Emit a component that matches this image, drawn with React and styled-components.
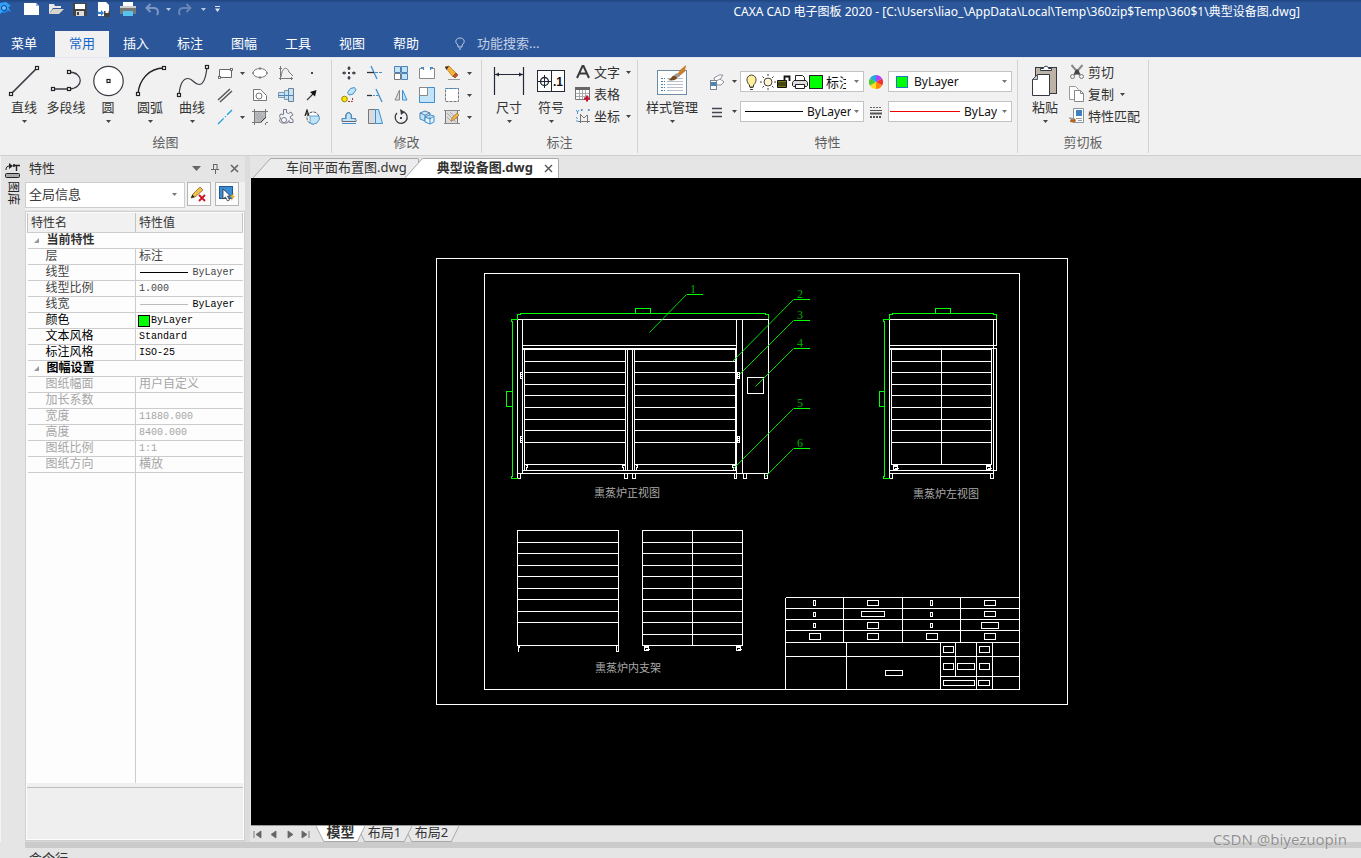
import React from "react";
import styled, { createGlobalStyle } from "styled-components";

const UI = '"Noto Sans", "Noto Sans CJK SC", sans-serif';
const MONO = '"Liberation Mono", "Noto Sans CJK SC", monospace';
const INK = "#3b3b46";
const BLUE = "#3f8fd0";
const SKY = "#c3e4f7";

const Global = createGlobalStyle`
  * { box-sizing: border-box; }
  html, body { margin: 0; }
  body { font-family: ${UI}; font-size: 13px; color: #333; overflow: hidden; }
  button, input, select { font: inherit; color: inherit; }
  button { background: none; border: 0; padding: 0; cursor: default; }
  svg { display: block; flex: none; }
`;

const Page = styled.div`
  position: relative;
  display: flex;
  flex-direction: column;
  height: 100vh;
  background: #e5e5e5;
  overflow: hidden;
`;

/* ---------- title bar ---------- */
const TitleBar = styled.header`
  display: flex;
  align-items: flex-start;
  height: 31px;
  color: #fff;
  background: linear-gradient(#1f4480, #2b579a 3px);
`;
const QuickBar = styled.div`
  display: flex;
  align-items: center;
  height: 18px;
`;
const QuickButton = styled.button`
  display: flex;
  align-items: center;
  justify-content: center;
  width: ${(p) => p.$w || 24}px;
  height: 18px;
`;
const WindowTitle = styled.h1`
  margin: 0 61px 0 auto;
  font-size: 12px;
  font-weight: 400;
  line-height: 24px;
  white-space: nowrap;
`;

/* ---------- ribbon tabs ---------- */
const TabRow = styled.nav`
  display: flex;
  height: 26px;
  background: #2b579a;
  color: #fff;
`;
const MenuButton = styled.button`
  width: 48px;
  height: 26px;
  margin-right: 7px;
  padding-bottom: 2px;
  line-height: 24px;
`;
const RibbonTab = styled.button`
  width: 54px;
  height: 26px;
  padding-bottom: 2px;
  line-height: 24px;
  color: ${(p) => (p.$active ? "#1467c8" : "#fff")};
  background: ${(p) => (p.$active ? "#f1f1f1" : "transparent")};
`;
const SearchBox = styled.label`
  display: flex;
  align-items: center;
  gap: 9px;
  height: 24px;
  margin-left: 19px;
`;
const SearchInput = styled.input`
  width: 120px;
  padding: 0;
  border: 0;
  outline: 0;
  background: none;
  color: #fff;
  &::placeholder { color: #c3cfe4; opacity: 1; }
`;

/* ---------- ribbon ---------- */
const Ribbon = styled.section`
  display: flex;
  height: 99px;
  background: #f1f1f1;
  border-top: 1px solid #e2e6ee;
  border-bottom: 1px solid #cfcfcf;
`;
const Group = styled.div`
  display: flex;
  flex-direction: column;
  width: ${(p) => p.$w}px;
  margin: 2px 0;
  border-right: 1px solid #d2d2d2;
`;
const GroupBody = styled.div`
  display: flex;
  height: 73px;
  padding: 2px 0 0 ${(p) => p.$pad}px;
`;
const Caption = styled.div`
  text-align: center;
  line-height: 18px;
  color: #5f5f5f;
`;
const Big = styled.button`
  display: flex;
  flex-direction: column;
  align-items: center;
  width: ${(p) => p.$w || 42}px;
  height: 64px;
  padding-top: 1px;
  line-height: 16px;
  white-space: nowrap;
  svg + span { margin-bottom: 5px; }
`;
const Grid = styled.div`
  display: grid;
  grid-template-columns: ${(p) => p.$cols};
  grid-auto-rows: 22px;
`;
const Tool = styled.button`
  display: flex;
  align-items: center;
  justify-content: ${(p) => (p.$menu ? "flex-start" : "center")};
  gap: ${(p) => p.$gap || 5}px;
  padding-left: ${(p) => (p.$menu ? 4 : 0)}px;
`;
const TextTool = styled.button`
  display: flex;
  align-items: center;
  gap: 3px;
  height: 22px;
  padding-bottom: 2px;
  line-height: 20px;
  white-space: nowrap;
`;
const Stack = styled.div`
  display: flex;
  flex-direction: column;
  padding-left: ${(p) => p.$pad || 0}px;
`;
const ComboRows = styled.div`
  display: grid;
  grid-template-columns: 31px 124px 24px 124px;
  grid-auto-rows: 21px;
  row-gap: 9px;
  padding: 9px 0 0 5px;
`;
const ComboIcon = styled.button`
  display: flex;
  align-items: center;
  justify-content: ${(p) => (p.$center ? "center" : "flex-start")};
  gap: 7px;
`;
const Combo = styled.label`
  display: flex;
  align-items: center;
  gap: ${(p) => p.$gap || 0}px;
  padding: 0 4px ${(p) => (p.$tight ? "0 1px" : "0 4px")};
  background: #fff;
  border: 1px solid #c3c3c3;
`;
const Select = styled.select`
  flex: 1;
  min-width: 0;
  width: 10px;
  height: 18px;
  padding: 0 0 0 ${(p) => p.$pad || 0}px;
  margin-right: ${(p) => p.$gap || 5}px;
  border: 0;
  outline: 0;
  background: none;
  appearance: none;
  color: ${(p) => p.$color || "#111"};
  font-size: ${(p) => p.$size || 12}px;
  text-overflow: clip;
  overflow: hidden;
`;

/* ---------- work area ---------- */
const Work = styled.main`
  display: flex;
  flex: 1;
  min-height: 0;
`;
const SideStrip = styled.aside`
  width: 25px;
  padding: 7px 0 0 4px;
  border-left: 1px solid #f4f4f4;
`;
const SideTab = styled.button`
  display: flex;
  flex-direction: column;
  align-items: center;
  gap: 2px;
  width: 15px;
  font-size: 12px;
  line-height: 14px;
  color: #222;
  span { writing-mode: vertical-rl; text-orientation: sideways; }
`;
const Panel = styled.aside`
  display: flex;
  flex-direction: column;
  width: 220px;
  border-bottom: 1px solid #d8d8d8;
`;
const PanelHead = styled.div`
  display: flex;
  align-items: center;
  height: 26px;
  padding: 0 2px 2px 4px;
  gap: 2px;
`;
const PanelTitle = styled.h2`
  margin: 0 auto 0 0;
  padding-bottom: 2px;
  font-size: 13px;
  font-weight: 400;
`;
const HeadButton = styled.button`
  display: flex;
  align-items: center;
  justify-content: center;
  width: 17px;
  height: 16px;
`;
const PanelTools = styled.div`
  display: flex;
  align-items: flex-start;
  gap: 2px;
  height: 28px;
  background: #f1f1f1;
`;
const PanelCombo = styled.label`
  display: flex;
  align-items: center;
  width: 160px;
  height: 26px;
  padding: 0 7px 2px 3px;
  background: #fff;
  border: 1px solid #cdcdcd;
`;
const FramedButton = styled.button`
  display: flex;
  align-items: center;
  justify-content: center;
  width: 24px;
  height: 24px;
  margin-right: 2px;
  background: #fcfcfc;
  border: 1px solid #b5b5b5;
`;
const Sheet = styled.div`
  display: flex;
  flex: 1;
  flex-direction: column;
  min-height: 0;
  margin-top: 1px;
  padding: 1px;
  background: #fdfdfd;
  border: 1px solid #d0d0d0;
`;
const Table = styled.table`
  width: 100%;
  table-layout: fixed;
  border-collapse: collapse;
  font-family: ${MONO};
  font-size: 12px;
  line-height: 14px;
  th, td {
    height: 16px;
    padding: 1px 0 0;
    border-bottom: 1px solid #cccccc;
    font-weight: 400;
    text-align: left;
    white-space: nowrap;
    overflow: hidden;
  }
  thead th {
    height: 19px;
    padding-left: 3px;
    background: #f1f1f1;
    border-right: 1px solid #c4c4c4;
    border-left: 1px solid #c4c4c4;
    font-family: ${UI};
  }
`;
const NameCol = styled.col`
  width: 108px;
`;
const Row = styled.tr`
  color: ${(p) => (p.$tone === "off" ? "#a6a6a6" : p.$tone === "dark" ? "#000" : "#444")};
  && th { padding-left: 18px; border-right: 1px solid #cccccc; }
  && td { padding-left: ${(p) => (p.$flush ? 2 : 3)}px; }
`;
const SectionRow = styled.tr`
  color: ${(p) => (p.$dark ? "#000" : "#333")};
  && th { font-weight: 700; }
`;
const SectionName = styled.span`
  display: flex;
  align-items: center;
  gap: 8px;
  padding-left: 6px;
`;
const Value = styled.span`
  display: flex;
  align-items: center;
  justify-content: ${(p) => (p.$end ? "flex-end" : "flex-start")};
  gap: ${(p) => (p.$end ? 4 : 1)}px;
  padding-right: ${(p) => (p.$end ? 8 : 0)}px;
  height: 14px;
  font-size: ${(p) => (p.$cjk ? 12 : 10)}px;
  color: ${(p) => p.$color || "inherit"};
`;
const Rest = styled.div`
  flex: 1;
  width: 109px;
  border-right: 1px solid #cccccc;
`;
const NoteGap = styled.div`
  height: 4px;
  background: #efefef;
`;
const Note = styled.div`
  height: 52px;
  border-top: 1px solid #bdbdbd;
  background: #efefef;
`;
const Splitter = styled.div`
  width: 5px;
  margin-right: 1px;
  background: #dcdcdc;
`;

const Docs = styled.section`
  display: flex;
  flex: 1;
  flex-direction: column;
  min-width: 0;
`;
const DocTabs = styled.div`
  display: flex;
  align-items: flex-end;
  height: 22px;
  padding-left: 2px;
`;
const DocTab = styled.div`
  display: flex;
  margin-left: ${(p) => (p.$over ? -14 : 0)}px;
  height: 20px;
`;
const DocLabel = styled.div`
  display: flex;
  align-items: center;
  gap: 11px;
  padding: 0 ${(p) => (p.$active ? 5 : 11)}px 1px ${(p) => (p.$active ? 14 : 15)}px;
  background: ${(p) => (p.$active ? "#fff" : "#ececec")};
  border-top: 1px solid #a9a9a9;
  border-right: 1px solid #a9a9a9;
  border-radius: 0 2px 0 0;
`;
const DocName = styled.button`
  padding-bottom: 2px;
  font-weight: ${(p) => (p.$active ? 700 : 400)};
  line-height: 17px;
  white-space: nowrap;
`;
const Canvas = styled.div`
  flex: 1;
  min-height: 0;
  padding: 72px 0 0 179px;
  background: #000;
  overflow: hidden;
`;
const SheetTabs = styled.div`
  display: flex;
  height: 17px;
  border-top: 1px solid #9a9a9a;
`;
const NavButton = styled.button`
  display: flex;
  align-items: center;
  width: 16px;
  height: 16px;
  padding-left: 2px;
`;
const SheetTab = styled.div`
  position: relative;
  z-index: ${(p) => p.$z};
  display: flex;
  margin-left: ${(p) => (p.$first ? 1 : -8)}px;
`;
const SheetLabel = styled.button`
  width: ${(p) => (p.$active ? 33 : 39)}px;
  height: 16px;
  padding-bottom: 3px;
  background: ${(p) => (p.$active ? "#fff" : "#e9e9e9")};
  border-bottom: 1px solid #a9a9a9;
  font-size: ${(p) => (p.$active ? 14 : 13)}px;
  font-weight: ${(p) => (p.$active ? 700 : 400)};
  line-height: 12px;
  white-space: nowrap;
`;
const BottomBar = styled.div`
  height: 6px;
  margin-left: 25px;
  background: #cbcbcb;
`;
const CommandBar = styled.footer`
  height: 10px;
  padding-left: 29px;
  line-height: 20px;
  overflow: hidden;
`;
const Watermark = styled.div`
  position: absolute;
  right: 14px;
  bottom: 9px;
  z-index: 5;
  font-size: 15px;
  line-height: 20px;
  color: #8f8f8f;
  text-shadow: 0 0 1px #ffffff;
`;

/* ---------- icons ---------- */
const Svg = ({ s = 16, w, h, children, ...rest }) => (
  <svg width={w || s} height={h || s} viewBox={`0 0 ${w || s} ${h || s}`} fill="none" stroke={INK} aria-hidden="true" {...rest}>
    {children}
  </svg>
);
const Arrow = ({ color = "#444" }) => (
  <Svg w={5} h={3} stroke="none"><path d="M0 0h5L2.5 3z" fill={color} /></Svg>
);
const Node = ({ x, y }) => <rect x={x - 1.5} y={y - 1.5} width="3" height="3" fill="#fff" stroke="#222" strokeWidth="1.2" />;

const big = {
  line: <><path d="M5 31 31 5" strokeWidth="1.7" /><Node x={5} y={31} /><Node x={31} y={5} /></>,
  pline: <><path d="M5 26h16c15 0 15-17 0-17" strokeWidth="1.3" /><Node x={5} y={26} /><Node x={21} y={26} /><Node x={21} y={9} /></>,
  circle: <><circle cx="18.5" cy="18" r="14.7" fill="#fff" strokeWidth="1.2" /><Node x={18.5} y={18} /></>,
  arc: <><path d="M6 31C7 17 17 5 32 5" strokeWidth="1.3" stroke="#222" /><Node x={6} y={31} /><Node x={32} y={5} /></>,
  curve: <><path d="M5 32C6 20 9 15.500 14 15.500S20 21.500 25 21.500 32 14 33 4" strokeWidth="1.2" /><Node x={5} y={32} /><Node x={33} y={4} /></>,
  dim: <><path d="M3.500 4v28M32.500 4v28M4 11.500h28" stroke="#222836" strokeWidth="1.200" /><path d="M4 11.500l4-2v4zM32 11.500l-4-2v4z" fill="#222836" stroke="none" /></>,
  symbol: <><rect x="4.500" y="7.500" width="27" height="21" fill="#fff" stroke="#222836" /><path d="M18.500 8v20M5 18.500h13M11.500 12v13" stroke="#222836" /><circle cx="11.500" cy="18.500" r="4" stroke="#222836" strokeWidth="1.300" /><text x="20" y="23" fontFamily="Liberation Sans, sans-serif" fontWeight="700" fontSize="12" fill="#111" stroke="none">.1</text></>,
  style: <>
    <rect x="3.500" y="7.500" width="29" height="24" fill="#fff" stroke="#6f8ca6" />
    <path d="M7 15.500h4M7 18.500h4M7 21.500h4M7 24.500h4M7 27.500h4" stroke="#4f7ea8" strokeDasharray="2 1" />
    <path d="M13 15.500h16M13 18.500h16M13 21.500h16M13 24.500h16M13 27.500h16" stroke="#b5bfce" />
    <path d="M32 2l-6 5-3 5 2 1.500 6-5z" fill="#c97f2d" stroke="none" /><path d="M23 10l-3 2 3 3 3-2z" fill="#999" stroke="none" /><path d="M20.500 12.500c-3 0-3 3.500-6.500 4.500 4 1 9 0 9-2.500z" fill="#7b4a1c" stroke="none" />
  </>,
  paste: <>
    <rect x="8.500" y="4.500" width="21" height="26" fill="#bdb3a6" stroke="#333a46" />
    <path d="M13.500 7.500v-2h3c0-3 5-3 5 0h3v2z" fill="#fff" stroke="#333a46" />
    <path d="M10.500 11.500h12v21h-17v-16z" fill="#fff" stroke="#333a46" /><path d="M10.500 11.500v5h-5z" stroke="#333a46" strokeWidth=".8" fill="#ccc" />
  </>,
};

const ico = {
  rect: <><path d="M2.500 4.500h12v8h-12z" fill="#fff" stroke="#666" /><rect x="1.500" y="11.500" width="2" height="2" fill="#fff" stroke="#555" strokeWidth=".8" /><rect x="13.500" y="3.500" width="2" height="2" fill="#fff" stroke="#555" strokeWidth=".8" /></>,
  parallel: <path d="M1 13 13 2M3 15 15 4" stroke="#555" strokeWidth="1.400" />,
  cline: <path d="M1 15 15 1" stroke="#1e9de0" strokeWidth="1.300" strokeDasharray="8 2 1 2" />,
  ellipse: <><ellipse cx="8" cy="8" rx="7" ry="4.500" fill="#fff" stroke="#777" /><path d="M8 2v3M8 11v3M0 8h2M14 8h2" stroke="#777" /></>,
  poly: <><path d="M1.500 2.500h7l6 6v5h-13z" fill="#fff" stroke="#777" /><circle cx="7" cy="9" r="3" stroke="#777" /></>,
  hatch: <><rect x="2.500" y="2.500" width="11" height="11" fill="#b7b9bd" stroke="#777" /><path d="M0 2.500h16M0 13.500h16M2.500 0v16M13.500 0v16" stroke="#777" /><path d="M4 5l7 7M6 4l6 6M4 8l4 4" stroke="#a5a5a8" /><path d="M9 14l5-5v5z" fill="#eee" stroke="none" /><path d="M9 13l5-5" /></>,
  graph: <path d="M2.500 1v14M1 13.500h14M3 12C4 2 9 1 11 7l4 4M1 3.500h3M13.500 12v3" stroke="#777" />,
  shaft: <><path d="M.5 5.500h6v5h-6zM6.500 3.500h4v9h-4z" fill={SKY} stroke="#7d97ad" /><path d="M10.500 1.500h5v13h-5z" fill={SKY} stroke="#6c8196" /><path d="M0 8.500h16" stroke="#4d84b5" /></>,
  gear: <><path d="M5.500.500h3v3l2 1 2.500-1.500 2 3-2.500 1.500v2l2.500 1v3h-4v-2l-2 2.500H3.500l-2-2 1-3-1-1.500 1-2.500 3 .5z" fill="#eef2f6" stroke="#778" /><circle cx="6" cy="11" r="2.500" fill="#fff" stroke="#778" /></>,
  dot: <rect x="7" y="7" width="2" height="2" fill="#444" stroke="none" />,
  pointer: <><path d="M3 13l6-6" strokeWidth="1.300" /><path d="M12.500 3 11 9.500 6 5z" fill="#111" stroke="none" /></>,
  acircle: <><circle cx="9" cy="9" r="6" stroke="#555" strokeDasharray="3 1" fill="#fff" /><path d="M6 7h9a6 6 0 0 1-9 7z" fill={SKY} stroke={BLUE} strokeWidth=".8" /><path d="M1 7 3 1l2 6M2 5h2" stroke="#222" strokeWidth="1.200" /></>,

  move: <><path d="M8 2v3M8 11v3M2 8h3M11 8h3" strokeWidth="1.600" /><path d="M8 1l2 2.500H6zM8 15l2-2.500H6zM1 8l2.500-2v4zM15 8l-2.500-2v4z" fill={INK} stroke="none" /><rect x="7" y="7" width="2" height="2" fill={INK} stroke="none" /></>,
  trim: <><path d="M4 1l6 13" stroke={BLUE} strokeWidth="1.300" /><path d="M0 7.500h7" stroke="#333" strokeWidth="1.300" /><path d="M8 7.500h8" stroke={BLUE} strokeDasharray="3 1" /></>,
  array: <><path d="M1.500 1.500h6v6h-6zM8.500 1.500h6v6h-6zM8.500 8.500h6v6h-6z" fill={SKY} stroke="#4d84b5" /><path d="M1.500 8.500h6v6h-6z" fill="#fff" stroke="#777" /></>,
  stretch: <><path d="M.5 3.500h15v10H.5z" fill="#fff" stroke="#888" /><path d="M5 3.500h6" stroke="#fff" strokeWidth="2" /><path d="M2 2.500h2.500V5M14 2.500h-2.500V5" stroke={BLUE} strokeWidth="1.200" /></>,
  erase: <><path d="M1 2l4-1 7 7-3 4z" fill="#f2b23c" stroke="#b77a1c" strokeWidth=".7" /><path d="M9 11l3-3 2 2-3 3z" fill="#c2572f" stroke="#8a3b1c" strokeWidth=".7" /><path d="M1 2l1.500 3L5 1z" fill="#333" stroke="none" /><path d="M4 14.500h12" stroke="#999" /></>,
  copy2: <><circle cx="3.500" cy="12" r="2.800" fill="#ffe600" stroke="#998a00" /><path d="M6.500 5.500l3-4 4-1 1.500 2.500-3 4-4 1z" fill={SKY} stroke={BLUE} /><path d="M7 14.500h4.500V10" stroke="#a33" strokeDasharray="2 1" /></>,
  extend: <><path d="M9 2l6 13" stroke={BLUE} strokeWidth="1.300" /><path d="M0 8.500h5" stroke="#333" strokeWidth="1.300" /><path d="M6 8.500h6" stroke={BLUE} strokeDasharray="2 1" /></>,
  mirror: <><path d="M6.500 3v10H2z" fill="#ddd" stroke="#888" /><path d="M9.500 3v10H14z" fill={SKY} stroke={BLUE} /></>,
  scale: <><path d="M.5.500h15v15H.5z" fill={SKY} stroke={BLUE} /><path d="M.5.500h8v8h-8z" fill="#fff" stroke="#888" /></>,
  explode: <><path d="M1.500 1.500h13v13h-13z" fill="#fff" stroke="#777" strokeDasharray="3 1" /><path d="M1.500 1.500h13" stroke={BLUE} strokeDasharray="2 1" /></>,
  offset: <><path d="M1 12.500h14c1-3-2-3-5-3 2-8-7-8-5 0H1z" fill={SKY} stroke="#667" /><path d="M1 14.500h14" stroke={BLUE} /><path d="M1 9.500h4C4 2 12 2 10.500 9.500H15" stroke={BLUE} /></>,
  taper: <><path d="M1.500.500h7v14h-7z" fill="#d9dbde" stroke="#777" /><path d="M8.500.500h3l4 14h-7z" fill={SKY} stroke={BLUE} /></>,
  rotate: <><path d="M4 4a6 6 0 1 0 7-1" strokeWidth="1.300" /><path d="M7 0l5 3-4 3z" fill={INK} stroke="none" /><rect x="7" y="8" width="2" height="2" fill={INK} stroke="none" /></>,
  box: <><path d="M1 4l5-2 5 2v6l-5 2-5-2zM1 4l5 2 5-2M6 6v6" fill={SKY} stroke="#4d84b5" /><path d="M6 8l5-2 4 1v6l-4 2-5-2zM6 8l5 2 4-3M11 10v5" fill="#e6f3fb" stroke={BLUE} /></>,
  edit: <><rect x="1.500" y="1.500" width="12" height="13" fill="#dcdcdf" stroke="#777" /><path d="M3 4l9 9M3 8l5 5M6 3l7 7" stroke="#aaa" /><path d="M0 1.500h16M0 14.500h16" stroke="#888" /><path d="M7 12l1-3 5-5 2 2-5 5z" fill="#f0b040" stroke="#a06a1a" strokeWidth=".6" /></>,

  textA: <path d="M2 14 7.500 2h1L14 14M4.500 9.500h7" strokeWidth="2" stroke="#3b3b3b" />,
  table: <><path d="M.5 1.500h14v12H.5z" fill="#fff" stroke="#777" /><path d="M0 1h15v3H0z" fill="#666" stroke="none" /><path d="M1 7.500h13M1 10.500h13M4.500 4v9M7.500 4v9M10.500 4v9" stroke="#aaa" /><path d="M9 12.500h6M12 9.500v6" stroke="#c8102e" strokeWidth="2" /></>,
  coord: <><path d="M5.500 6v9M3 13.500h12M6 7l3 3 3-3M12.500 7v8" stroke="#777" /><path d="M1 2l1.500 2L4 2M2.500 4v2M6 1l1.500 2M7.500 1 6 3M13 1l1.500 2M14.500 1 13 3M1 9l1.500 2M1 13h2" stroke={BLUE} strokeWidth=".9" /></>,

  layers: <><path d="M5 4l5-3h4l-4 6H6z" fill="#fff" stroke="#8a93a0" /><path d="M7 7l4-2 4 3-3 3H8z" fill="#fff" stroke="#8a93a0" /><rect x="1.500" y="6.500" width="6" height="9" fill="#fff" stroke="#7a8490" /><rect x="2" y="8" width="5" height="4" fill="#4d84b5" stroke="none" /></>,
  lines: <path d="M3 4.500h10M3 8.500h10M3 12.500h10" stroke="#445" strokeWidth="1.300" />,
  weights: <><path d="M2 3.500h12" stroke="#666" strokeDasharray="2 1" /><path d="M2 6.500h12" stroke="#555" /><path d="M2 9.500h12" stroke="#555" strokeWidth="2" /><path d="M2 13h12" stroke="#555" strokeWidth="2" strokeDasharray="2 1" /></>,
  cut: <><path d="M2.500 1 11 11M13.500 1 5 11" strokeWidth="2" stroke="#8a8a8a" /><path d="M6 7l2-2 2 2 1 3.500H5z" fill="#444" stroke="none" /><circle cx="3.500" cy="12.500" r="2" stroke="#777" /><circle cx="12.500" cy="12.500" r="2" stroke="#777" /></>,
  copy: <><path d="M.5.500h6l3 3v10h-9z" fill="#fff" stroke="#999" /><path d="M5.500 4.500h6l3 3v8h-9z" fill="#fff" stroke="#888" /><path d="M11.500 4.500v3h3" stroke="#888" /></>,
  match: <><path d="M4.500.500h10v14h-10z" fill="#fff" stroke="#8a93a0" /><path d="M7 2h6v6H7z" fill="#3f7fbf" stroke="none" /><path d="M7 10.500h6M9 12.500h4" stroke="#999" /><path d="M1 14c0-3 2-4 4-4l2 2c0 2-2 3-6 2z" fill="#b5651d" stroke="none" /><path d="M0 10l5 1" stroke="#999" strokeWidth="1.600" /></>,
};

const Icon = ({ n }) => <Svg>{ico[n]}</Svg>;

const Bulb = () => (
  <Svg w={14} h={16}><path d="M4.500 11C0 7 2 1 6.500 1s6.500 6 2 10v2h-4z" fill="#ffef9a" stroke="#444" /><path d="M5 13.500h3M5 15.500h3" stroke="#444" /></Svg>
);
const Sun = () => (
  <Svg><circle cx="8" cy="8" r="4" fill="#fff6cf" stroke="#444" /><path d="M8 0v2M8 14v2M0 8h2M14 8h2M2.500 2.500 4 4M12 12l1.500 1.500M13.500 2.500 12 4M4 12l-1.500 1.500" stroke="#444" /></Svg>
);
const Lock = () => (
  <Svg w={14} h={16}><path d="M.5 6.500h9v7h-9z" fill="#7a7a1a" stroke="#111" /><path d="M1 9h8M1 11h8" stroke="#111" /><path d="M7.500 7V2.500h5V7" stroke="#111" strokeWidth="1.800" /></Svg>
);
const Printer = () => (
  <Svg><path d="M3.500 6V1.500h7l2 2V6" fill="#fff" stroke="#222" /><path d="M2 6.500h12l1.500 2v3l-1 1h-13l-1-1v-3z" fill="#ddd" stroke="#222" /><path d="M3.500 10.500h9v4h-9z" fill="#fff" stroke="#222" /></Svg>
);
const Swatch = ({ s = 14, edge = "#222" }) => (
  <Svg s={s}><rect x=".5" y=".5" width={s - 1} height={s - 1} fill="#0f0" stroke={edge} /></Svg>
);
const Wheel = () => {
  const colors = ["#e33", "#f80", "#fd2", "#4c3", "#2ad", "#a4f"];
  const pt = (a) => [7 + 7 * Math.cos(a), 7 + 7 * Math.sin(a)];
  return (
    <Svg s={14} stroke="none">
      {colors.map((c, i) => {
        const [x1, y1] = pt((i - 0.5) * Math.PI / 3);
        const [x2, y2] = pt((i + 0.5) * Math.PI / 3);
        return <path key={c} d={`M7 7L${x1} ${y1}A7 7 0 0 1 ${x2} ${y2}z`} fill={c} />;
      })}
    </Svg>
  );
};

/* ---------- ribbon data ---------- */
const drawBig = [["line", "直线", 1], ["pline", "多段线", 0], ["circle", "圆", 1], ["arc", "圆弧", 1], ["curve", "曲线", 1]];
const drawSmall = [
  ["rect", 1, "矩形"], ["ellipse", 0, "椭圆"], ["graph", 0, "公式曲线"], ["dot", 0, "点"],
  ["parallel", 2, "平行线"], ["poly", 0, "多边形"], ["shaft", 0, "孔/轴"], ["pointer", 0, "箭头"],
  ["cline", 1, "中心线"], ["hatch", 0, "剖面线"], ["gear", 0, "齿轮"], ["acircle", 0, "局部放大"],
];
const editSmall = [
  ["move", 0, "平移"], ["trim", 0, "裁剪"], ["array", 0, "阵列"], ["stretch", 0, "拉伸"], ["erase", 1, "删除"],
  ["copy2", 0, "平移复制"], ["extend", 0, "延伸"], ["mirror", 0, "镜像"], ["scale", 0, "缩放"], ["explode", 1, "分解"],
  ["offset", 0, "等距线"], ["taper", 0, "过渡"], ["rotate", 0, "旋转"], ["box", 0, "打断"], ["edit", 1, "编辑"],
];

const BigTool = ({ icon, label, menu = true, w }) => (
  <Big $w={w}>
    <Svg s={36}>{big[icon]}</Svg>
    <span>{label}</span>
    {menu ? <Arrow /> : null}
  </Big>
);
const Small = ({ item: [n, menu, label], gap }) => (
  <Tool $menu={menu} $gap={gap} aria-label={label}>
    <Icon n={n} />
    {menu === 1 ? <Arrow /> : null}
  </Tool>
);

const RibbonBar = () => (
  <Ribbon>
    <Group $w={332}>
      <GroupBody $pad={3}>
        {drawBig.map(([i, l, m]) => <BigTool key={i} icon={i} label={l} menu={!!m} />)}
        <Grid $cols="34px 26px 26px 26px">
          {drawSmall.map((it) => <Small key={it[0]} item={it} gap={7} />)}
        </Grid>
      </GroupBody>
      <Caption>绘图</Caption>
    </Group>
    <Group $w={150}>
      <GroupBody $pad={4}>
        <Grid $cols="26px 26px 26px 26px 38px">
          {editSmall.map((it) => <Small key={it[0]} item={it} gap={7} />)}
        </Grid>
      </GroupBody>
      <Caption>修改</Caption>
    </Group>
    <Group $w={156}>
      <GroupBody $pad={6}>
        <BigTool icon="dim" label="尺寸" />
        <BigTool icon="symbol" label="符号" />
        <Stack $pad={3}>
          <TextTool><Icon n="textA" />文字<span /><Arrow /></TextTool>
          <TextTool><Icon n="table" />表格</TextTool>
          <TextTool><Icon n="coord" />坐标<span /><Arrow /></TextTool>
        </Stack>
      </GroupBody>
      <Caption>标注</Caption>
    </Group>
    <Group $w={380}>
      <GroupBody $pad={7}>
        <BigTool icon="style" label="样式管理" w={54} />
        <Stack $pad={5}>
          <ComboRows>
            <ComboIcon aria-label="图层"><Icon n="layers" /><Arrow /></ComboIcon>
            <Combo $gap={1}>
              <Bulb /><Sun /><Lock /><Printer /><Swatch />
              <Select $pad={2} $gap={7} $size={13} aria-label="当前图层"><option>标注</option></Select>
              <Arrow color="#777" />
            </Combo>
            <ComboIcon $center aria-label="颜色"><Wheel /></ComboIcon>
            <Combo>
              <Svg w={16} h={12}><rect x="3.500" y=".5" width="11" height="11" fill="#0f0" stroke="#1e7ac0" /></Svg>
              <Select $pad={5} aria-label="当前颜色"><option>ByLayer</option></Select>
              <Arrow color="#777" />
            </Combo>
            <ComboIcon aria-label="线型"><Icon n="lines" /><Arrow /></ComboIcon>
            <Combo>
              <Svg w={58} h={3} shapeRendering="crispEdges"><path d="M0 1.500h58" stroke="#000" /></Svg>
              <Select $pad={4} $gap={3} aria-label="当前线型"><option>ByLayer</option></Select>
              <Arrow color="#777" />
            </Combo>
            <ComboIcon $center aria-label="线宽"><Icon n="weights" /></ComboIcon>
            <Combo $tight>
              <Svg w={70} h={3} stroke="none"><rect y="1" width="70" height="1" fill="#f00000" /></Svg>
              <Select $pad={4} aria-label="当前线宽"><option>ByLayer</option></Select>
              <Arrow color="#777" />
            </Combo>
          </ComboRows>
        </Stack>
      </GroupBody>
      <Caption>特性</Caption>
    </Group>
    <Group $w={131}>
      <GroupBody $pad={6}>
        <BigTool icon="paste" label="粘贴" />
        <Stack $pad={3}>
          <TextTool><Icon n="cut" />剪切</TextTool>
          <TextTool><Icon n="copy" />复制<span /><Arrow /></TextTool>
          <TextTool><Icon n="match" />特性匹配</TextTool>
        </Stack>
      </GroupBody>
      <Caption>剪切板</Caption>
    </Group>
  </Ribbon>
);

/* ---------- title bar ---------- */
const Title = () => (
  <TitleBar>
    <QuickBar>
      <QuickButton $w={20} aria-label="CAXA">
        <Svg w={20} h={18} stroke="none"><circle cx="4" cy="8" r="5" fill="#1f7fe0" /><path d="M0 3l6-1 5 4-3 1 3 5-5-3-6 5z" fill="#2fa0f5" /><circle cx="4" cy="8" r="2.500" stroke="#0b3f8f" fill="#6fc0ff" /></Svg>
      </QuickButton>
      <QuickButton aria-label="新建"><Svg stroke="none"><path d="M0 2h12l3 3v9H0z" fill="#fff" /><path d="M12 2v3h3z" fill="#9fb2cc" /></Svg></QuickButton>
      <QuickButton aria-label="打开"><Svg stroke="none"><path d="M1 3h5l1 2h6v2H5l-4 6z" fill="#e8e8e8" /><path d="M5 8h11l-5 5H1z" fill="#d9d4c8" /></Svg></QuickButton>
      <QuickButton aria-label="保存"><Svg stroke="none"><path d="M1 2h14v13H2l-1-1z" fill="#444" /><path d="M3 3h10v5H3z" fill="#fff" /><path d="M4 10h8v5H4z" fill="#ddd" /><path d="M5 11h2v3H5z" fill="#444" /></Svg></QuickButton>
      <QuickButton aria-label="另存为"><Svg stroke="none"><path d="M2 1h8l3 3v11H2z" fill="#fff" /><path d="M1 9l2 2h2V9l3 3-3 3v-2H2z" fill="#2f7fd0" /><path d="M8 10h6v6H8z" fill="#444" /><path d="M9.500 10h3v2h-3z" fill="#fff" /></Svg></QuickButton>
      <QuickButton aria-label="打印"><Svg stroke="none"><path d="M3 1h10v4H3z" fill="#fff" /><path d="M0 5h16v8H0z" fill="#777" /><path d="M0 5h16v2H0z" fill="#ccc" /><path d="M3 10h10v5H3z" fill="#55c3ee" /></Svg></QuickButton>
      <QuickButton aria-label="撤销"><Svg stroke="#7d97c2" strokeWidth="2"><path d="M3 7h7c4 0 5 4 3 7" /><path d="M6.500 3 2.500 7l4 4" /></Svg></QuickButton>
      <QuickButton $w={9} aria-label="撤销列表"><Arrow color="#b9c8e0" /></QuickButton>
      <QuickButton aria-label="重做"><Svg stroke="#6684b6" strokeWidth="2"><path d="M13 7H6C2 7 1 11 3 14" /><path d="M9.500 3l4 4-4 4" /></Svg></QuickButton>
      <QuickButton $w={12} aria-label="重做列表"><Arrow color="#b9c8e0" /></QuickButton>
      <QuickButton $w={16} aria-label="自定义"><Svg w={5} h={6} stroke="none"><path d="M0 0h5v1H0zM0 2.500h5L2.500 6z" fill="#dfe6f1" /></Svg></QuickButton>
    </QuickBar>
    <WindowTitle>CAXA CAD 电子图板 2020 - [C:\Users\liao_\AppData\Local\Temp\360zip$Temp\360$1\典型设备图.dwg]</WindowTitle>
  </TitleBar>
);

const Tabs = () => (
  <TabRow>
    <MenuButton>菜单</MenuButton>
    {["常用", "插入", "标注", "图幅", "工具", "视图", "帮助"].map((t, i) => <RibbonTab key={t} $active={i === 0}>{t}</RibbonTab>)}
    <SearchBox>
      <Svg w={16} h={16} stroke="#c3cfe4"><path d="M6 12v-2C2 7 4 3 8 3s6 4 2 7v2zM7 14h2" /></Svg>
      <SearchInput placeholder="功能搜索..." aria-label="功能搜索" />
    </SearchBox>
  </TabRow>
);

/* ---------- property panel ---------- */
const Properties = () => (
  <Panel>
    <PanelHead>
      <PanelTitle>特性</PanelTitle>
      <HeadButton aria-label="菜单"><Svg w={9} h={5} stroke="none"><path d="M0 0h9L4.500 5z" fill="#666" /></Svg></HeadButton>
      <HeadButton aria-label="固定"><Svg w={9} h={11} stroke="#666"><path d="M2.500 1v5M2 1.500h4M6 1v5M0 6.500h8M4.500 7v4" /></Svg></HeadButton>
      <HeadButton aria-label="关闭"><Svg s={9} stroke="#666" strokeWidth="1.600"><path d="M1 1l7 7M8 1 1 8" /></Svg></HeadButton>
    </PanelHead>
    <PanelTools>
      <PanelCombo>
        <Select $size={13} $color="#3c3c3c" aria-label="选择对象"><option>全局信息</option></Select>
        <Arrow color="#777" />
      </PanelCombo>
      <FramedButton aria-label="清除选择">
        <Svg s={18}><path d="M1 13l2-4 7-7 3 3-8 7z" fill="#f2c050" stroke="#8a6a1a" strokeWidth=".8" /><path d="M1 13l1.500-3.500L4.500 12z" fill="#222" stroke="none" /><path d="M9 10l6 6M15 10l-6 6" stroke="#d01020" strokeWidth="1.800" /></Svg>
      </FramedButton>
      <FramedButton aria-label="快速选择">
        <Svg s={18}><rect x="1.500" y="1.500" width="13" height="12" fill="#3d8bd4" stroke="#1d5a96" /><path d="M5 4v10l2.500-2 2 4 2-1-2-4h3z" fill="#fff" stroke="#333" strokeWidth=".8" /><path d="M16 8l-4 4h2l-1 4 4-5h-2l1-3z" fill="#f5a623" stroke="none" /></Svg>
      </FramedButton>
    </PanelTools>
    <Sheet>
      <Table>
        <colgroup><NameCol /><col /></colgroup>
        <thead><tr><th scope="col">特性名</th><th scope="col">特性值</th></tr></thead>
        <tbody>
          <SectionRow><th colSpan={2} scope="colgroup"><SectionName><Svg s={5} stroke="none"><path d="M5 0v5H0z" fill="#999" /></Svg>当前特性</SectionName></th></SectionRow>
          <Row><th scope="row">层</th><td><Value $cjk>标注</Value></td></Row>
          <Row><th scope="row">线型</th><td><Value $end><Svg w={48} h={1}><path d="M0 .5h48" stroke="#000" /></Svg>ByLayer</Value></td></Row>
          <Row><th scope="row">线型比例</th><td><Value>1.000</Value></td></Row>
          <Row><th scope="row">线宽</th><td><Value $end $color="#000"><Svg w={48} h={1}><path d="M0 .5h48" stroke="#bbb" /></Svg>ByLayer</Value></td></Row>
          <Row $tone="dark" $flush><th scope="row">颜色</th><td><Value><Swatch s={12} edge="#000" />ByLayer</Value></td></Row>
          <Row $tone="dark"><th scope="row">文本风格</th><td><Value>Standard</Value></td></Row>
          <Row $tone="dark"><th scope="row">标注风格</th><td><Value>ISO-25</Value></td></Row>
          <SectionRow $dark><th colSpan={2} scope="colgroup"><SectionName><Svg s={5} stroke="none"><path d="M5 0v5H0z" fill="#999" /></Svg>图幅设置</SectionName></th></SectionRow>
          {[["图纸幅面", "用户自定义", 1], ["加长系数", ""], ["宽度", "11880.000"], ["高度", "8400.000"], ["图纸比例", "1:1"], ["图纸方向", "横放", 1]].map(([k, v, c]) => (
            <Row key={k} $tone="off"><th scope="row">{k}</th><td><Value $cjk={c}>{v}</Value></td></Row>
          ))}
        </tbody>
      </Table>
      <Rest />
      <NoteGap />
      <Note />
    </Sheet>
  </Panel>
);

/* ---------- drawing ---------- */
const H = ({ x1, x2, ys }) => <path d={ys.map((y) => `M${x1} ${y}H${x2}`).join("")} />;
const V = ({ xs, y1, y2 }) => <path d={xs.map((x) => `M${x} ${y1}V${y2}`).join("")} />;
const Box = ({ b: [x1, y1, x2, y2] }) => <rect x={x1} y={y1} width={x2 - x1} height={y2 - y1} />;
const shelves = [361, 372, 384, 395, 407, 419, 430, 442, 464];
const rack = [542, 553, 565, 576, 588, 599, 611, 622];
const leaders = [
  [649, 332, 686, 294, "1"], [732, 361, 793, 299, "2"], [739, 374, 793, 320, "3"],
  [755, 386, 793, 348, "4"], [733, 468, 793, 408, "5"], [765, 476, 793, 448, "6"],
];
const cells = [
  [813, 600, 815, 605], [867, 600, 878, 605], [930, 600, 932, 605], [984, 600, 995, 605],
  [813, 612, 815, 616], [861, 611, 884, 616], [930, 612, 932, 616], [984, 611, 995, 616],
  [813, 623, 815, 627], [867, 622, 878, 628], [930, 623, 932, 627], [981, 622, 998, 628],
  [809, 633, 820, 639], [867, 633, 878, 639], [926, 633, 937, 639], [984, 633, 995, 639],
  [943, 646, 953, 652], [979, 646, 989, 652], [943, 663, 953, 669], [957, 663, 974, 669], [979, 663, 989, 669],
  [885, 670, 902, 675], [943, 680, 974, 685], [978, 680, 989, 685],
];
const Dimension = ({ left, right }) => (
  <g stroke="#00ff00">
    <path d={`M${left} 318V314H${left + 3}V313H${right - 3}V314H${right}V318`} />
    <path d={`M${left} 319H${left - 6}V321H${left - 5}V476H${left - 6}V478H${left}`} />
    <path d={`M${left - 5} 391H${left - (left === 517 ? 11 : 10)}V406H${left - 5}`} />
  </g>
);
const Caster = ({ x, y }) => <path d={`M${x} ${y}h4v4h-4zM${x - 1} ${y + 1}h5M${x + 1} ${y + 3}h4`} />;

const Drawing = () => (
  <svg width="645" height="460" viewBox="430 250 645 460" role="img" aria-label="典型设备图">
    <g transform="translate(.5 .5)" fill="none" stroke="#fff" shapeRendering="crispEdges">
      <Box b={[436, 258, 1067, 704]} />
      <Box b={[484, 273, 1019, 689]} />

      <Box b={[517, 319, 768, 473]} />
      <V xs={[522, 736, 742]} y1={319} y2={473} />
      <H x1={522} x2={736} ys={[345, 348, 349, 470]} />
      <V xs={[524, 625, 627, 632, 634, 735]} y1={348} y2={470} />
      <H x1={524} x2={625} ys={shelves} />
      <H x1={634} x2={735} ys={shelves} />
      {[[517, 520], [624, 627], [632, 635], [734, 736], [743, 746], [764, 767]].map(([a, b]) => <Box key={a} b={[a, 473, b, 478]} />)}
      {[[520, 522], [737, 739]].flatMap(([a, b]) => [372, 436].map((y) => <path key={`${a}${y}`} d={`M${a} ${y}H${b}V${y + 6}H${a}zM${a} ${y + 2}H${b}M${a} ${y + 4}H${b}`} />))}
      <path d="M525 465h2v2h-1v3M624 465h-2v2h1v3M635 465h2v2h-1v3M734 465h-2v2h1v3" />
      <Box b={[747, 377, 763, 393]} />

      <path d="M889 319H996V345H889M889 319V473H993V319M889 348H996V470H889M889 349H991" />
      <V xs={[891, 991]} y1={348} y2={464} />
      <V xs={[941]} y1={349} y2={464} />
      <H x1={891} x2={991} ys={shelves} />
      <Box b={[889, 473, 892, 478]} />
      <Box b={[990, 473, 993, 478]} />
      <Caster x={893} y={465} /><Caster x={986} y={465} />

      <Box b={[517, 530, 618, 645]} />
      <H x1={517} x2={618} ys={rack} />
      <path d="M517 645h2v2h-1v4M518 645v6M616 645v6h2v-6" />
      <Box b={[642, 530, 742, 645]} />
      <H x1={642} x2={742} ys={[...rack, 634]} />
      <V xs={[692]} y1={530} y2={645} />
      <Caster x={644} y={646} /><Caster x={736} y={646} />

      <H x1={785} x2={1019} ys={[597, 608, 619, 630, 642, 656]} />
      <V xs={[785]} y1={597} y2={689} />
      <V xs={[843, 902, 960]} y1={597} y2={642} />
      <V xs={[846, 940, 976, 992]} y1={642} y2={689} />
      <V xs={[955]} y1={642} y2={676} />
      <H x1={940} x2={1019} ys={[676]} />
      {cells.map((b) => <Box key={b.join()} b={b} />)}

      <Dimension left={517} right={768} />
      <Dimension left={889} right={996} />
      <path d="M635 313V308H650V313M935 313V308H950V313" stroke="#00ff00" />
      <g stroke="#00ff00">
        {leaders.map(([, , x2, y2, n]) => <path key={n} d={`M${x2} ${y2}H${x2 + 16}`} />)}
      </g>
      <g stroke="#00f000" strokeWidth=".9" shapeRendering="auto">
        {leaders.map(([x1, y1, x2, y2, n]) => <path key={n} d={`M${x1} ${y1}L${x2} ${y2}`} />)}
      </g>
    </g>
    <g fill="#00a800" fontFamily="Liberation Serif, serif" fontSize="12" textAnchor="middle">
      {leaders.map(([, , x2, y2, n]) => <text key={n} x={x2 + 7} y={y2 - 1}>{n}</text>)}
    </g>
    <g fill="#a9a9a9" fontFamily="Noto Sans CJK SC, sans-serif" fontSize="11" textAnchor="middle">
      <text x="627" y="497">熏蒸炉正视图</text>
      <text x="946" y="498">熏蒸炉左视图</text>
      <text x="628" y="672">熏蒸炉内支架</text>
    </g>
  </svg>
);

/* ---------- documents ---------- */
const DocEdge = ({ fill }) => (
  <Svg w={18} h={20} stroke="none"><path d="M0 20 18 0v20z" fill={fill} /><path d="M0 20 17 1l1-.5" stroke="#a9a9a9" fill="none" /></Svg>
);
const SheetEdge = ({ fill, flip }) => (
  <Svg w={8} h={16} stroke="none">
    <path d={flip ? "M8 0 0 16V0z" : "M0 0 8 16V0z"} fill={fill} />
    <path d={flip ? "M8 0 0 16" : "M0 0 8 16"} stroke="#a9a9a9" fill="none" />
  </Svg>
);
const SheetItem = ({ label, active, z }) => {
  const fill = active ? "#fff" : "#e9e9e9";
  return (
    <SheetTab $z={z} $first={active}>
      <SheetEdge fill={fill} />
      <SheetLabel $active={active}>{label}</SheetLabel>
      <SheetEdge fill={fill} flip />
    </SheetTab>
  );
};

export default function App() {
  return (
    <Page>
      <Global />
      <Title />
      <Tabs />
      <RibbonBar />
      <Work>
        <SideStrip>
          <SideTab>
            <Svg w={15} h={16} stroke="#222"><path d="M1 7c0-3 1-4 4-4" /><path d="M4 0l4 3-4 3z" fill="#222" stroke="none" /><path d="M8 2.500h7M11.500 2v6M9 1v3" strokeWidth="1.400" /><rect x=".5" y="10.500" width="14" height="4" rx="1" fill="#aaa" /></Svg>
            <span>图库</span>
          </SideTab>
        </SideStrip>
        <Properties />
        <Splitter />
        <Docs>
          <DocTabs>
            <DocTab><DocEdge fill="#ececec" /><DocLabel><DocName>车间平面布置图.dwg</DocName></DocLabel></DocTab>
            <DocTab $over>
              <DocEdge fill="#fff" />
              <DocLabel $active>
                <DocName $active>典型设备图.dwg</DocName>
                <button aria-label="关闭"><Svg s={9} stroke="#555" strokeWidth="1.400"><path d="M1 1l7 7M8 1 1 8" /></Svg></button>
              </DocLabel>
            </DocTab>
          </DocTabs>
          <Canvas><Drawing /></Canvas>
          <SheetTabs>
            {[["首页", "M1 1v7M8 1v7L3 4.500z"], ["上一页", "M7 1v7L2 4.500z"], ["下一页", "M3 1v7l5-3.500z"], ["末页", "M8 1v7M1 1v7l5-3.500z"]].map(([l, d]) => (
              <NavButton key={l} aria-label={l}><Svg s={9} stroke="#666" strokeWidth=".8"><path d={d} fill="#666" /></Svg></NavButton>
            ))}
            <SheetItem label="模型" active z={3} />
            <SheetItem label="布局1" z={2} />
            <SheetItem label="布局2" z={1} />
          </SheetTabs>
        </Docs>
      </Work>
      <BottomBar />
      <CommandBar>命令行</CommandBar>
      <Watermark>CSDN @biyezuopin</Watermark>
    </Page>
  );
}
